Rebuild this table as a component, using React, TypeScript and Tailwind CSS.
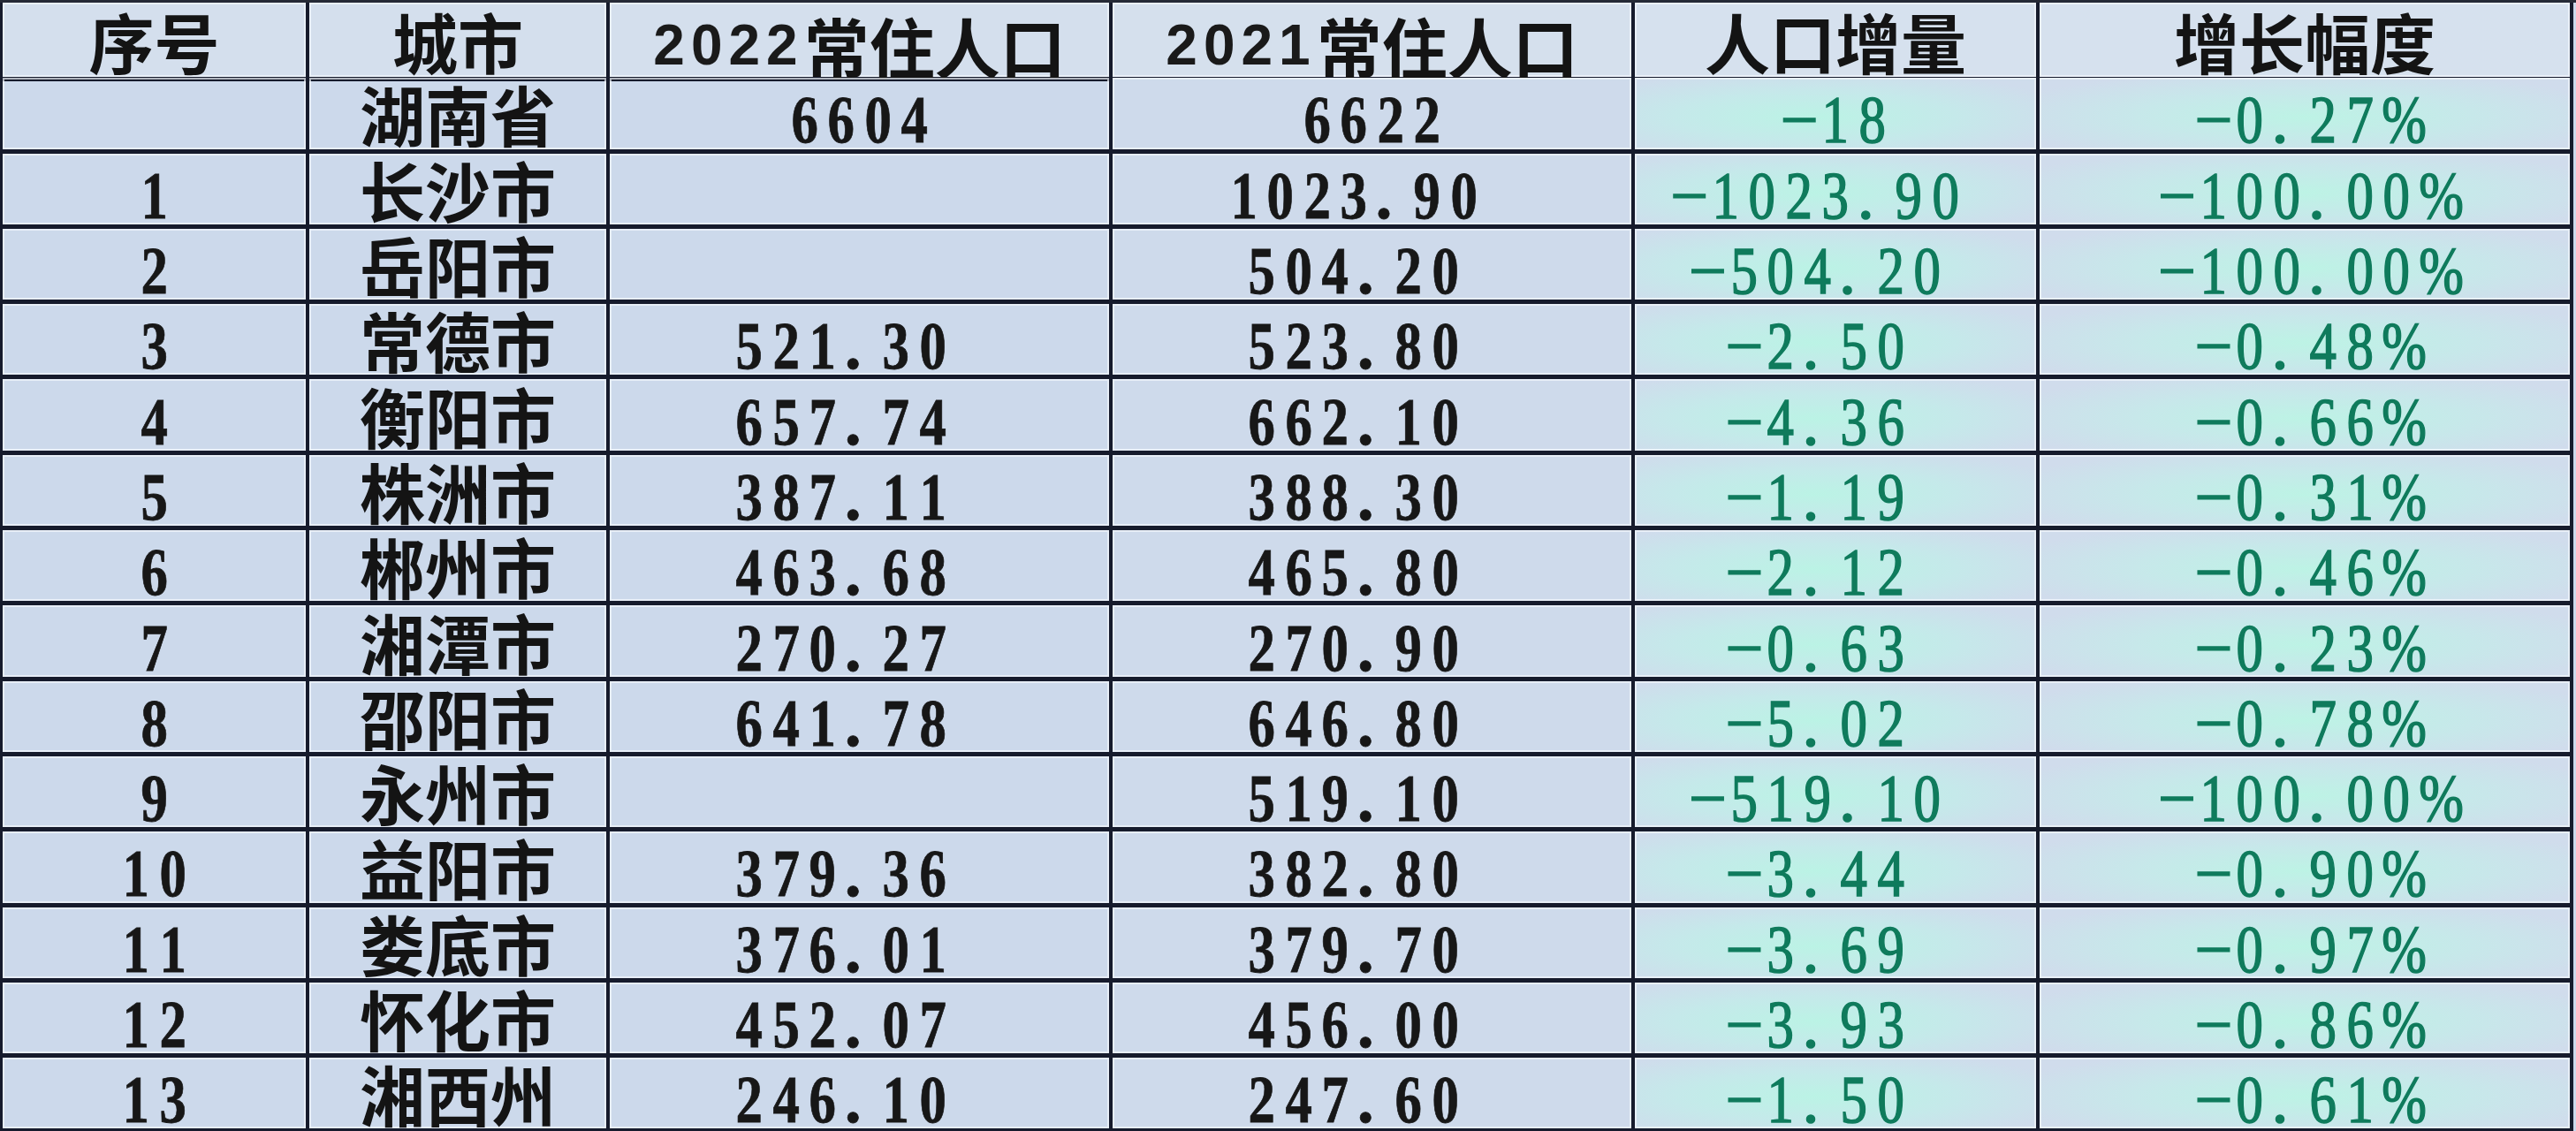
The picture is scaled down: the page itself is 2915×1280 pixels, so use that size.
import React from 'react';

const rows: string[][] = [
  ['', '湖南省', '6604', '6622', '-18', '-0.27%'],
  ['1', '长沙市', '', '1023.90', '-1023.90', '-100.00%'],
  ['2', '岳阳市', '', '504.20', '-504.20', '-100.00%'],
  ['3', '常德市', '521.30', '523.80', '-2.50', '-0.48%'],
  ['4', '衡阳市', '657.74', '662.10', '-4.36', '-0.66%'],
  ['5', '株洲市', '387.11', '388.30', '-1.19', '-0.31%'],
  ['6', '郴州市', '463.68', '465.80', '-2.12', '-0.46%'],
  ['7', '湘潭市', '270.27', '270.90', '-0.63', '-0.23%'],
  ['8', '邵阳市', '641.78', '646.80', '-5.02', '-0.78%'],
  ['9', '永州市', '', '519.10', '-519.10', '-100.00%'],
  ['10', '益阳市', '379.36', '382.80', '-3.44', '-0.90%'],
  ['11', '娄底市', '376.01', '379.70', '-3.69', '-0.97%'],
  ['12', '怀化市', '452.07', '456.00', '-3.93', '-0.86%'],
  ['13', '湘西州', '246.10', '247.60', '-1.50', '-0.61%'],
];

const cell =
  'flex items-center justify-center leading-none border-r-4 border-b-[5px] border-[#161b2c] shadow-[inset_0_0_0_2px_rgba(242,246,252,0.7)]';
const cjk = "font-['Noto_Sans_CJK_SC',sans-serif] font-bold text-[74px] text-[#141414]";
const serif = "font-['Liberation_Serif',serif] text-[76px] whitespace-pre";
const ink = 'font-bold text-[#171717] [-webkit-text-stroke:0.8px_#171717]';
const green = 'text-[#0f7b5c] [-webkit-text-stroke:1.6px_#0f7b5c]';

// the sheet uses a narrow fixed-width serif, so every glyph gets its own cell
function Num({ v }: { v: string }) {
  let s = v.replace('-', '−');
  if (s.includes('.') && !s.endsWith('%')) s += '\u00a0';
  return (
    <span className="flex">
      {s.split('').map((c, i) =>
        c === '.' ? (
          <span key={i} className="inline-block w-[41.5px] text-left pl-[4px]">
            .
          </span>
        ) : c === '−' ? (
          <span key={i} className="inline-block w-[41.5px] text-center">
            −
          </span>
        ) : (
          <span key={i} className="inline-block w-[41.5px] text-center scale-x-[0.8]">
            {c}
          </span>
        ),
      )}
    </span>
  );
}

function Year({ y }: { y: string }) {
  return (
    <span className="font-['Liberation_Sans',sans-serif] font-bold text-[64px] tracking-[7px] text-[#1a1a1a]">
      {y}
    </span>
  );
}

export default function App() {
  return (
    <div className="w-[2915px] h-[1280px] overflow-hidden bg-[#cbd8ea] border-t-[3px] border-[#252a36]">
      <div className="grid grid-cols-[350px_340px_569px_591px_458px_604px] auto-rows-[85.3px] bg-[#ccd9eb]">
        <div className={`${cell} ${cjk} h-[89px] border-l-[3px] bg-[#d4dfed] pt-[2px]`}>序号</div>
        <div className={`${cell} ${cjk} h-[89px] bg-[#d4dfed] pt-[2px]`}>城市</div>
        <div className={`${cell} ${cjk} h-[89px] bg-[#d4dfed] items-baseline pt-[12px]`}>
          <Year y="2022" />
          常住人口
        </div>
        <div className={`${cell} ${cjk} h-[89px] bg-[#d5e0ed] items-baseline pt-[12px]`}>
          <Year y="2021" />
          常住人口
        </div>
        <div className={`${cell} ${cjk} h-[89px] bg-[#d6e1ee] pt-[2px]`}>人口增量</div>
        <div className={`${cell} ${cjk} h-[89px] bg-[#d6e1ee] pt-[2px]`}>增长幅度</div>

        {rows.map((r, i) => (
          <React.Fragment key={i}>
            <div className={`${cell} ${serif} ${ink} border-l-[3px] pt-[14px]`}>
              <Num v={r[0]} />
            </div>
            <div className={`${cell} ${cjk}`}>{r[1]}</div>
            <div className={`${cell} ${serif} ${ink} pt-[14px]`}>
              <Num v={r[2]} />
            </div>
            <div className={`${cell} ${serif} ${ink} pt-[14px] bg-[#cedaeb]`}>
              <Num v={r[3]} />
            </div>
            <div
              className={`${cell} ${serif} ${green} pt-[14px] bg-[radial-gradient(ellipse_at_45%_55%,#bbf3e5_0%,#c5e9ea_45%,#cfdcec_85%)]`}
            >
              <Num v={r[4]} />
            </div>
            <div
              className={`${cell} ${serif} ${green} pt-[14px] bg-[radial-gradient(ellipse_at_50%_55%,#bdf3e5_0%,#c7e8ea_45%,#d0dcec_85%)]`}
            >
              <Num v={r[5]} />
            </div>
          </React.Fragment>
        ))}
      </div>
    </div>
  );
}
